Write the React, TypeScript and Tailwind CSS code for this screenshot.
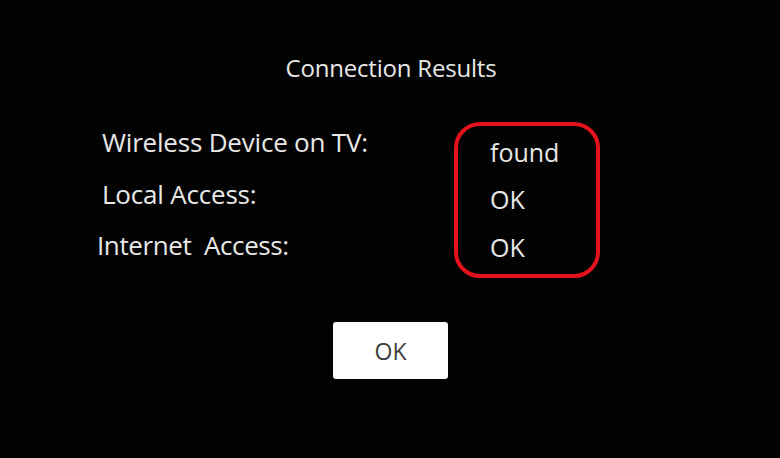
export default function App() {
  const font = { fontFamily: "'Open Sans', Lato, sans-serif" };
  return (
    <div className="w-[780px] h-[458px] bg-[#030303] flex flex-col items-center text-[#e8e8e8]" style={font}>
      <div className="mt-[54px] text-[24px] leading-[28px] pl-[2px] tracking-[-0.2px]">Connection Results</div>
      <div className="mt-[40px] w-full flex items-start">
        <div className="flex flex-col text-[26px] leading-[32px] pl-[97px] mt-[4px] tracking-[-0.2px]">
          <div className="ml-[5px]">Wireless Device on TV:</div>
          <div className="ml-[5px] mt-[20px]">Local Access:</div>
          <div className="mt-[19px] tracking-[-0.4px]">Internet&nbsp; Access:</div>
        </div>
        <div className="ml-auto mr-[180px] w-[146px] h-[156px] border-[4px] border-[#e3121c] rounded-[26px] pl-[32px] pt-[10px] flex flex-col text-[25px] leading-[32px]">
          <div>found</div>
          <div className="mt-[15px]">OK</div>
          <div className="mt-[16px]">OK</div>
        </div>
      </div>
      <button className="mt-[44px] w-[115px] h-[57px] bg-white rounded-[3px] text-[#404040] text-[23px] leading-[28px] pl-[1px]">
        OK
      </button>
    </div>
  );
}
